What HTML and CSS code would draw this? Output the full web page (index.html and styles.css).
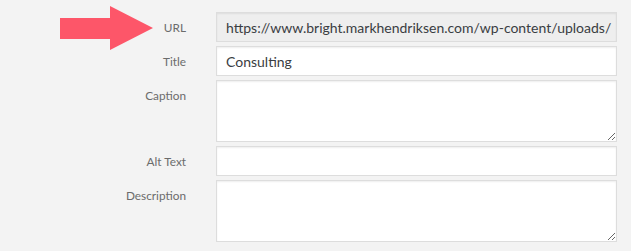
FILE: index.html
```html
<!DOCTYPE html>
<html lang="en">

<head>
    <meta charset="UTF-8">
    <title>Attachment details</title>
    <link rel="stylesheet" href="styles.css">
</head>

<body>
    <div class="settings">
        <span class="arrow">
            <svg width="94" height="46" viewBox="0 0 94 46">
                <polygon points="0,12 50,12 50,0 93,22 50,44 50,33 0,33" fill="#fd5669"></polygon>
            </svg>
        </span>
        <div class="row">
            <label class="name">URL</label>
            <input class="field readonly" type="text" readonly value="https://www.bright.markhendriksen.com/wp-content/uploads/">
        </div>
        <div class="row">
            <label class="name">Title</label>
            <input class="field" type="text" value="Consulting">
        </div>
        <div class="row">
            <label class="name">Caption</label>
            <textarea class="field area"></textarea>
        </div>
        <div class="row">
            <label class="name">Alt Text</label>
            <input class="field" type="text" value="">
        </div>
        <div class="row">
            <label class="name">Description</label>
            <textarea class="field area"></textarea>
        </div>
    </div>
</body>

</html>
```

FILE: styles.css
```css
html,
body {
    width: 100%;
    height: 100%;
    margin: 0;
    padding: 0;
    background: #f3f3f3;
}

.settings {
    position: relative;
    padding-top: 12px;
    font-family: Lato, "Open Sans", sans-serif;
}

.settings .arrow {
    position: absolute;
    left: 60px;
    top: 6px;
    line-height: 0;
}

.settings .row {
    display: flex;
    align-items: flex-start;
    gap: 30px;
    margin-bottom: 4px;
}

.settings .name {
    width: 186px;
    flex: none;
    text-align: right;
    font-size: 11.8px;
    color: #6b6b6b;
    padding-top: 8px;
    line-height: 16px;
}

.settings .field {
    box-sizing: border-box;
    width: 401px;
    height: 30px;
    margin: 0;
    padding: 0 4px 0 9px;
    border: 1px solid #ddd;
    border-radius: 0;
    background: #fff;
    box-shadow: inset 0 1px 2px rgba(0, 0, 0, .07);
    font-family: Lato, "Open Sans", sans-serif;
    font-size: 14px;
    color: #3a3d42;
    outline: none;
}

.settings .field.readonly {
    background: #eee;
}

.settings .field.area {
    height: 62px;
    padding: 6px 9px;
    resize: vertical;
}
```
